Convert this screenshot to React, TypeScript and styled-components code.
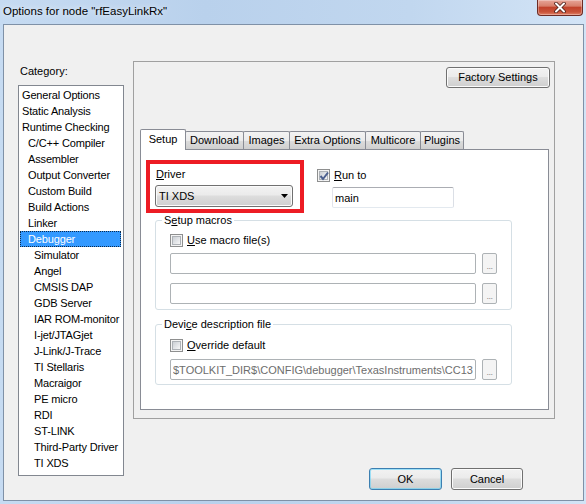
import React from 'react';
import styled, { createGlobalStyle } from 'styled-components';

const GlobalStyle = createGlobalStyle`
  html, body {
    margin: 0;
    padding: 0;
  }
  body {
    width: 586px;
    height: 504px;
    overflow: hidden;
    background: #c2d7ef;
    font-family: "Liberation Sans", Arial, sans-serif;
    font-size: 11px;
    color: #000;
  }
`;

const Window = styled.div`
  width: 586px;
  height: 504px;
  display: flex;
  flex-direction: column;
  background: linear-gradient(to right, #c6dbf2 0%, #b9d1ec 35%, #c1d7ef 70%, #d3e4f6 100%);
`;

const TitleBar = styled.div`
  height: 24px;
  display: flex;
  align-items: flex-start;
  padding-left: 3px;
`;

const Title = styled.div`
  font-family: "Liberation Sans", Arial, sans-serif;
  font-size: 11.5px;
  line-height: 16px;
  margin-top: 3px;
  text-shadow: 0 0 6px rgba(255, 255, 255, 0.9);
`;

const CloseButton = styled.div`
  margin-left: auto;
  margin-right: 3px;
  width: 46px;
  height: 16px;
  box-sizing: border-box;
  border: 1px solid #6d2b24;
  border-top: none;
  border-radius: 0 0 4px 4px;
  background: linear-gradient(#e7a598 0%, #d8806c 40%, #c2432c 50%, #c9543a 80%, #e2846a 100%);
  box-shadow: inset 0 0 0 1px rgba(255, 255, 255, 0.3);
  display: flex;
  align-items: center;
  justify-content: center;
`;

const Client = styled.div`
  box-sizing: border-box;
  width: 581px;
  height: 477px;
  margin-left: 3px;
  border: 1px solid #7f91a7;
  background: #f0f0f0;
  display: flex;
  align-items: flex-start;
  padding: 36px 0 0 14px;
`;

const LeftCol = styled.div`
  width: 106px;
  display: flex;
  flex-direction: column;
`;

const CategoryLabel = styled.div`
  margin: 4px 0 0 2px;
  line-height: 13px;
`;

const CategoryList = styled.div`
  box-sizing: border-box;
  margin-top: 7px;
  width: 106px;
  height: 391px;
  border: 1px solid #828790;
  background: #fff;
  padding: 1px 2px 1px 1px;
`;

const CategoryItem = styled.div<{ $level: number; $selected?: boolean }>`
  box-sizing: border-box;
  height: 16px;
  line-height: 16px;
  padding-left: ${(p) => 2 + p.$level * 6}px;
  white-space: nowrap;
  letter-spacing: -0.15px;
  background: ${(p) => (p.$selected ? '#3399ff' : 'transparent')};
  color: ${(p) => (p.$selected ? '#fff' : '#000')};
  outline: ${(p) => (p.$selected ? '1px dotted #0b2a4c' : 'none')};
  outline-offset: -1px;
`;

const RightCol = styled.div`
  margin-left: 9px;
  display: flex;
  flex-direction: column;
`;

const OptionsBox = styled.div`
  box-sizing: border-box;
  width: 422px;
  height: 358px;
  border: 1px solid #a0a0a0;
  display: flex;
  flex-direction: column;
  padding: 5px 0 8px 0;
`;

const PushButton = styled.div<{ $w: number; $h?: number; $default?: boolean }>`
  box-sizing: border-box;
  width: ${(p) => p.$w}px;
  height: ${(p) => p.$h ?? 22}px;
  border: 1px solid ${(p) => (p.$default ? '#3c7fb1' : '#707070')};
  border-radius: 3px;
  background: linear-gradient(#f2f2f2 0%, #ebebeb 45%, #dddddd 50%, #cfcfcf 100%);
  box-shadow: inset 0 0 0 1px ${(p) => (p.$default ? 'rgba(90, 210, 252, 0.55)' : '#fbfbfb')};
  display: flex;
  align-items: center;
  justify-content: center;
  line-height: 13px;
`;

const FactoryButton = styled(PushButton)`
  align-self: flex-end;
  margin-right: 4px;
`;

const TabStrip = styled.div`
  display: flex;
  align-items: flex-end;
  height: 20px;
  margin: 41px 0 0 6px;
`;

const Tab = styled.div<{ $w: number; $active?: boolean }>`
  box-sizing: border-box;
  width: ${(p) => p.$w}px;
  height: ${(p) => (p.$active ? 21 : 18)}px;
  margin-left: -1px;
  margin-bottom: ${(p) => (p.$active ? -1 : 0)}px;
  border: 1px solid #898c95;
  border-bottom: none;
  border-radius: 2px 2px 0 0;
  background: ${(p) =>
    p.$active ? '#fff' : 'linear-gradient(#f3f3f3 0%, #ebebeb 50%, #dddddd 50%, #cfcfcf 100%)'};
  position: relative;
  z-index: ${(p) => (p.$active ? 1 : 0)};
  display: flex;
  justify-content: center;
  padding-top: ${(p) => (p.$active ? 3 : 2)}px;
  line-height: 13px;
  &:first-child {
    margin-left: 0;
  }
`;

const TabPane = styled.div`
  box-sizing: border-box;
  width: 409px;
  height: 261px;
  margin-left: 6px;
  border: 1px solid #898c95;
  background: #fff;
  padding: 10px 0 0 5px;
`;

const TopRow = styled.div`
  display: flex;
  align-items: flex-start;
`;

const Highlight = styled.div`
  box-sizing: border-box;
  width: 158px;
  height: 53px;
  border: 4px solid #ed1c24;
  padding: 4px 0 0 5px;
`;

const FieldLabel = styled.div`
  line-height: 13px;
  padding-left: 1px;
`;

const Combo = styled.div`
  box-sizing: border-box;
  margin-top: 4px;
  width: 138px;
  height: 22px;
  border: 1px solid #707070;
  border-radius: 3px;
  background: linear-gradient(#f2f2f2 0%, #ebebeb 45%, #dddddd 50%, #cfcfcf 100%);
  box-shadow: inset 0 0 0 1px #fbfbfb;
  display: flex;
  align-items: center;
  justify-content: space-between;
  padding: 0 4px 0 3px;
`;

const RunCol = styled.div`
  margin: 9px 0 0 13px;
  display: flex;
  flex-direction: column;
`;

const CheckRow = styled.label`
  display: flex;
  align-items: center;
  gap: 4px;
  height: 13px;
  line-height: 13px;
`;

const CheckFrame = styled.span`
  position: relative;
  box-sizing: border-box;
  width: 13px;
  height: 13px;
  flex: none;
  border: 1px solid #8e8f8f;
  background: #f4f4f4;
  padding: 1px;
  display: flex;
`;

const CheckFill = styled.span`
  flex: 1;
  border: 1px solid #aeb2b7;
  background: linear-gradient(135deg, #cbcfd4 0%, #e3e5e8 55%, #f7f7f7 100%);
`;

const CheckMark = styled.svg`
  position: absolute;
  left: 0;
  top: 0;
`;

const TextBox = styled.input<{ $w: number; $disabled?: boolean }>`
  box-sizing: border-box;
  width: ${(p) => p.$w}px;
  height: 21px;
  margin: 0;
  padding: 0 2px;
  font: inherit;
  color: ${(p) => (p.$disabled ? '#6d6d6d' : '#000')};
  background: #fff;
  border: 1px solid;
  border-color: ${(p) => (p.$disabled ? '#adb2b5' : '#abadb3 #dbdfe6 #e3e9ef #e2e3ea')};
  border-radius: 2px;
  outline: none;
`;

const RunToBox = styled(TextBox)`
  margin: 5px 0 0 15px;
`;

const Group = styled.fieldset<{ $mt: number; $pb: number }>`
  box-sizing: border-box;
  width: 357px;
  min-width: 0;
  margin: ${(p) => p.$mt}px 0 0 9px;
  padding: 0 0 ${(p) => p.$pb}px 0;
  border: 1px solid #d5dfe5;
  border-radius: 3px;
`;

const Legend = styled.legend`
  margin-left: 6px;
  padding: 0 2px;
  line-height: 13px;
`;

const GroupBody = styled.div<{ $mt: number }>`
  padding: ${(p) => p.$mt}px 0 0 14px;
  display: flex;
  flex-direction: column;
`;

const PathRow = styled.div<{ $mt: number }>`
  display: flex;
  gap: 6px;
  margin-top: ${(p) => p.$mt}px;
`;

const BrowseButton = styled.div`
  box-sizing: border-box;
  width: 15px;
  height: 21px;
  border: 1px solid #adb2b5;
  border-radius: 2px;
  background: #f4f4f4;
  color: #8d8d8d;
  font-size: 9px;
  display: flex;
  align-items: flex-end;
  justify-content: center;
  padding-bottom: 2px;
  letter-spacing: -0.5px;
`;

const Footer = styled.div`
  display: flex;
  justify-content: flex-end;
  gap: 9px;
  margin-top: 49px;
  padding-right: 32px;
`;

const Key = styled.u`
  text-decoration: underline;
  text-underline-offset: 1px;
`;

const categories: { name: string; level: number }[] = [
  { name: 'General Options', level: 0 },
  { name: 'Static Analysis', level: 0 },
  { name: 'Runtime Checking', level: 0 },
  { name: 'C/C++ Compiler', level: 1 },
  { name: 'Assembler', level: 1 },
  { name: 'Output Converter', level: 1 },
  { name: 'Custom Build', level: 1 },
  { name: 'Build Actions', level: 1 },
  { name: 'Linker', level: 1 },
  { name: 'Debugger', level: 1 },
  { name: 'Simulator', level: 2 },
  { name: 'Angel', level: 2 },
  { name: 'CMSIS DAP', level: 2 },
  { name: 'GDB Server', level: 2 },
  { name: 'IAR ROM-monitor', level: 2 },
  { name: 'I-jet/JTAGjet', level: 2 },
  { name: 'J-Link/J-Trace', level: 2 },
  { name: 'TI Stellaris', level: 2 },
  { name: 'Macraigor', level: 2 },
  { name: 'PE micro', level: 2 },
  { name: 'RDI', level: 2 },
  { name: 'ST-LINK', level: 2 },
  { name: 'Third-Party Driver', level: 2 },
  { name: 'TI XDS', level: 2 },
];

const tabs: { name: string; w: number }[] = [
  { name: 'Setup', w: 46 },
  { name: 'Download', w: 59 },
  { name: 'Images', w: 47 },
  { name: 'Extra Options', w: 77 },
  { name: 'Multicore', w: 56 },
  { name: 'Plugins', w: 44 },
];

const CheckBox: React.FC<{ checked?: boolean }> = ({ checked }) => (
  <CheckFrame>
    <CheckFill />
    {checked && (
      <CheckMark width="13" height="13" viewBox="0 0 13 13">
        <path d="M2.5 6 L5 9 L10 2.5" fill="none" stroke="#4b5f8e" strokeWidth="2" />
      </CheckMark>
    )}
  </CheckFrame>
);

const App: React.FC = () => {
  return (
    <>
      <GlobalStyle />
      <Window>
        <TitleBar>
          <Title>Options for node "rfEasyLinkRx"</Title>
          <CloseButton>
            <svg width="14" height="11" viewBox="0 0 14 11">
              <path d="M3 1.5 L11 9.5 M11 1.5 L3 9.5" stroke="#4a1c16" strokeWidth="3.6" strokeLinecap="round" />
              <path d="M3 1.5 L11 9.5 M11 1.5 L3 9.5" stroke="#fff" strokeWidth="2" strokeLinecap="round" />
            </svg>
          </CloseButton>
        </TitleBar>
        <Client>
          <LeftCol>
            <CategoryLabel>Category:</CategoryLabel>
            <CategoryList>
              {categories.map((c) => (
                <CategoryItem key={c.name} $level={c.level} $selected={c.name === 'Debugger'}>
                  {c.name}
                </CategoryItem>
              ))}
            </CategoryList>
          </LeftCol>
          <RightCol>
            <OptionsBox>
              <FactoryButton $w={104} $h={21}>
                Factory Settings
              </FactoryButton>
              <TabStrip>
                {tabs.map((t) => (
                  <Tab key={t.name} $w={t.w} $active={t.name === 'Setup'}>
                    {t.name}
                  </Tab>
                ))}
              </TabStrip>
              <TabPane>
                <TopRow>
                  <Highlight>
                    <FieldLabel>
                      <Key>D</Key>river
                    </FieldLabel>
                    <Combo>
                      <span>TI XDS</span>
                      <svg width="7" height="4" viewBox="0 0 7 4">
                        <path d="M0 0 H7 L3.5 4 Z" fill="#000" />
                      </svg>
                    </Combo>
                  </Highlight>
                  <RunCol>
                    <CheckRow>
                      <CheckBox checked />
                      <span>
                        <Key>R</Key>un to
                      </span>
                    </CheckRow>
                    <RunToBox $w={122} defaultValue="main" />
                  </RunCol>
                </TopRow>
                <Group $mt={1} $pb={5}>
                  <Legend>
                    S<Key>e</Key>tup macros
                  </Legend>
                  <GroupBody $mt={7}>
                    <CheckRow>
                      <CheckBox />
                      <span>
                        <Key>U</Key>se macro file(s)
                      </span>
                    </CheckRow>
                    <PathRow $mt={6}>
                      <TextBox $w={306} $disabled disabled defaultValue="" />
                      <BrowseButton>...</BrowseButton>
                    </PathRow>
                    <PathRow $mt={9}>
                      <TextBox $w={306} $disabled disabled defaultValue="" />
                      <BrowseButton>...</BrowseButton>
                    </PathRow>
                  </GroupBody>
                </Group>
                <Group $mt={8} $pb={4}>
                  <Legend>
                    Devi<Key>c</Key>e description file
                  </Legend>
                  <GroupBody $mt={8}>
                    <CheckRow>
                      <CheckBox />
                      <span>
                        <Key>O</Key>verride default
                      </span>
                    </CheckRow>
                    <PathRow $mt={7}>
                      <TextBox
                        $w={306}
                        $disabled
                        disabled
                        defaultValue="$TOOLKIT_DIR$\CONFIG\debugger\TexasInstruments\CC1310F128.ddf"
                      />
                      <BrowseButton>...</BrowseButton>
                    </PathRow>
                  </GroupBody>
                </Group>
              </TabPane>
            </OptionsBox>
            <Footer>
              <PushButton $w={73} $default>
                OK
              </PushButton>
              <PushButton $w={72}>Cancel</PushButton>
            </Footer>
          </RightCol>
        </Client>
      </Window>
    </>
  );
};

export default App;
